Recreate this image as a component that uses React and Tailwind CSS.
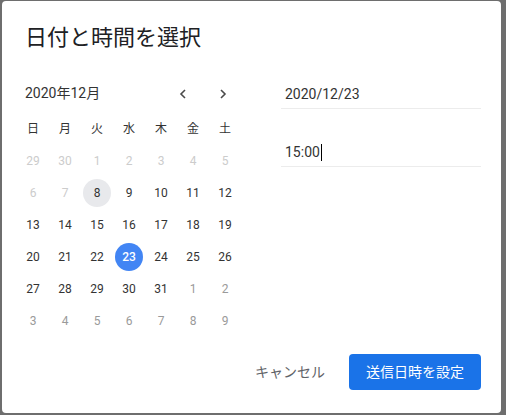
import React from "react";

const weekdays = ["日", "月", "火", "水", "木", "金", "土"];

// 0 = previous month (faint), 1 = current month, 2 = next month (grey)
const rows = [
  [[29, 0], [30, 0], [1, 0], [2, 0], [3, 0], [4, 0], [5, 0]],
  [[6, 0], [7, 0], [8, 1], [9, 1], [10, 1], [11, 1], [12, 1]],
  [[13, 1], [14, 1], [15, 1], [16, 1], [17, 1], [18, 1], [19, 1]],
  [[20, 1], [21, 1], [22, 1], [23, 1], [24, 1], [25, 1], [26, 1]],
  [[27, 1], [28, 1], [29, 1], [30, 1], [31, 1], [1, 2], [2, 2]],
  [[3, 2], [4, 2], [5, 2], [6, 2], [7, 2], [8, 2], [9, 2]],
];

const Chevron = ({ dir }) => (
  <svg width="10" height="12" viewBox="0 0 10 12" fill="none">
    <polyline
      points={dir === "left" ? "7,2 3,6 7,10" : "3,2 7,6 3,10"}
      stroke="#4a4a4a"
      strokeWidth="1.6"
    />
  </svg>
);

const Day = ({ n, kind }) => {
  const today = kind === 1 && n === 8;
  const selected = kind === 1 && n === 23;
  let cls = "text-[#333333]";
  if (kind === 0) cls = "text-[#cccccc]";
  if (kind === 2) cls = "text-[#9a9a9a]";
  if (selected) cls = "bg-[#4285f4] text-white font-medium";
  if (today) cls = "bg-[#e8e9ec] text-[#333333]";
  return (
    <div className="h-8 w-8 flex items-center justify-center">
      <div className={`h-7 w-7 rounded-full flex items-center justify-center text-[12px] ${cls}`}>
        {n}
      </div>
    </div>
  );
};

const App = () => {
  return (
    <div
      className="min-h-screen w-full bg-[#6e6e6e] pt-[1px] pl-[2px]"
      style={{ fontFamily: "Roboto, 'Noto Sans CJK JP', sans-serif" }}
    >
      <div className="w-[499px] h-[412px] bg-white rounded-[4px] flex flex-col pl-[23px] pr-[20px] pt-[23px]">
        <h2 className="h-7 leading-7 text-[22px] text-[#202124] font-normal">日付と時間を選択</h2>

        <div className="flex mt-[25px]">
          {/* calendar */}
          <div className="-ml-2 w-[224px]">
            <div className="h-8 flex items-center pl-2 pt-[1px]">
              <span className="text-[14px] text-[#333333]">2020年12月</span>
              <div className="ml-auto flex -mr-[2px]">
                <div className="w-10 h-8 flex items-center justify-center">
                  <Chevron dir="left" />
                </div>
                <div className="w-10 h-8 flex items-center justify-center">
                  <Chevron dir="right" />
                </div>
              </div>
            </div>
            <div className="grid grid-cols-7 mt-1">
              {weekdays.map((w) => (
                <div key={w} className="h-8 flex items-center justify-center text-[12px] text-[#333333]">
                  {w}
                </div>
              ))}
            </div>
            {rows.map((r, i) => (
              <div key={i} className="grid grid-cols-7">
                {r.map(([n, k], j) => (
                  <Day key={j} n={n} kind={k} />
                ))}
              </div>
            ))}
          </div>

          {/* inputs */}
          <div className="ml-10 w-[200px] flex flex-col pt-[4px]">
            <div className="h-7 border-b border-[#ececec] flex items-center pl-1 text-[14px] text-[#333333]">
              2020/12/23
            </div>
            <div className="h-7 mt-[30px] border-b border-[#ececec] flex items-center pl-1 text-[14px] text-[#333333]">
              15:00
              <span className="inline-block w-px h-[17px] bg-black ml-[1px]" />
            </div>
          </div>
        </div>

        <div className="flex justify-end items-center mt-[17px]">
          <button className="h-9 px-4 text-[14px] text-[#5f6368] mr-2">キャンセル</button>
          <button className="h-9 w-[132px] rounded-[4px] bg-[#1a73e8] text-white text-[14px]">
            送信日時を設定
          </button>
        </div>
      </div>
    </div>
  );
};

export default App;
